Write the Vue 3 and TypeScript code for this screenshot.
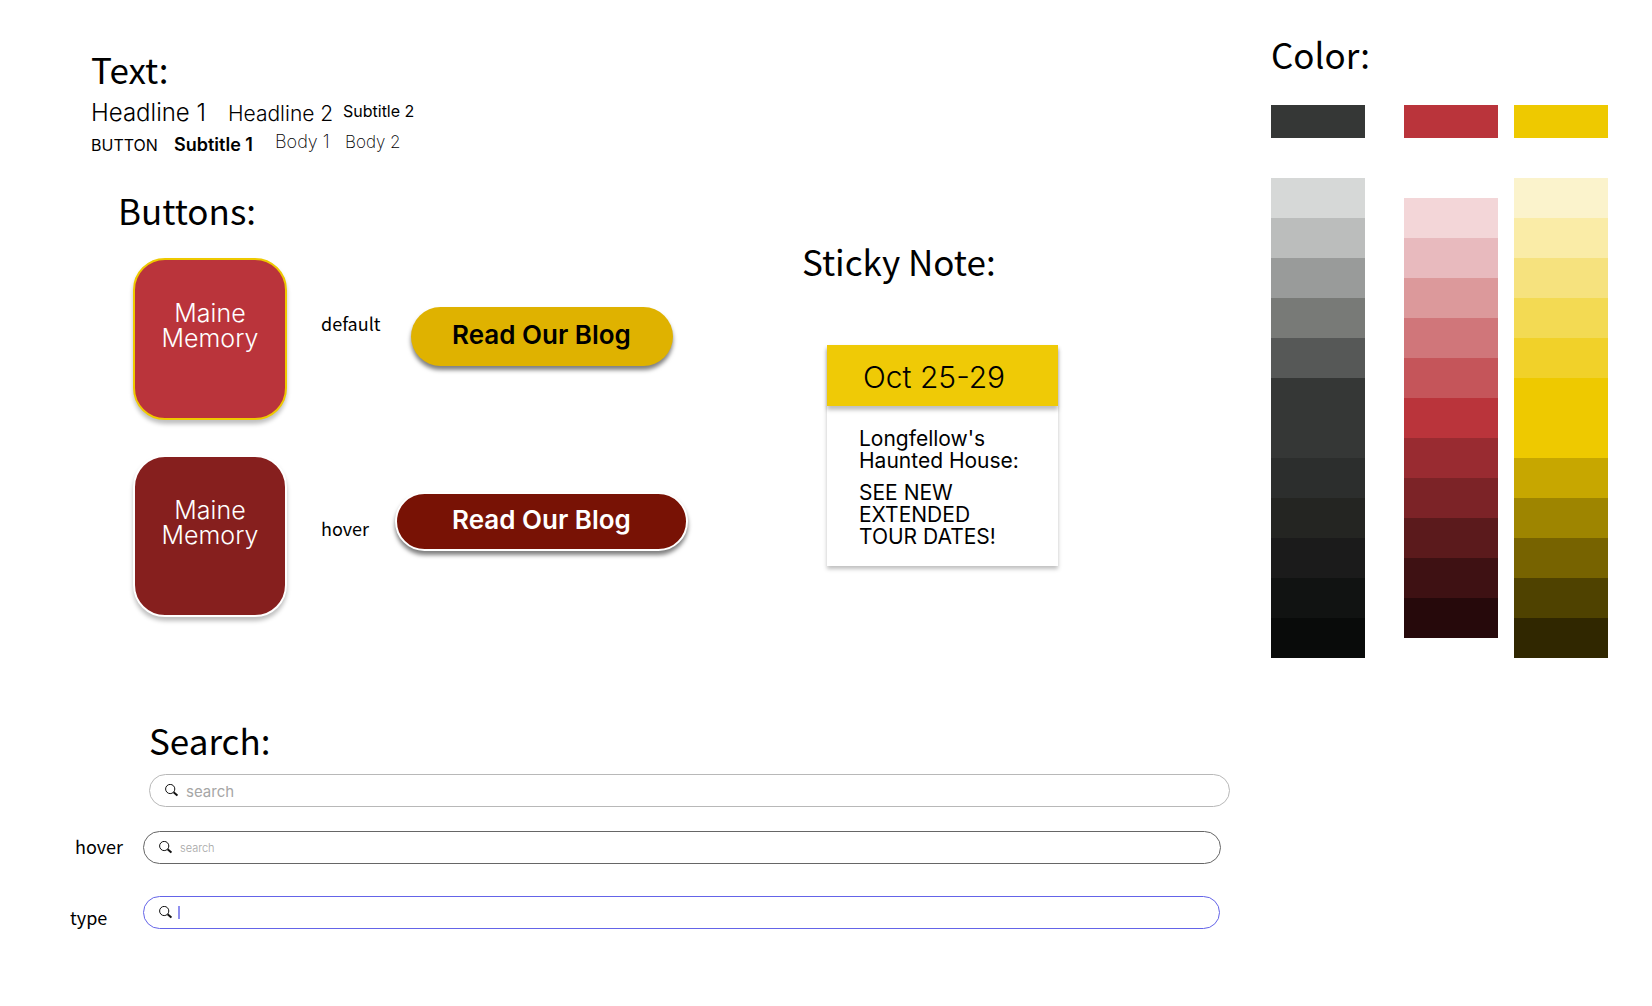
<script setup lang="ts">
interface Ramp {
  name: string
  base: string
  shades: string[]
}

const ramps: Ramp[] = [
  {
    name: 'gray',
    base: '#353736',
    shades: ['#d6d8d7', '#bbbdbc', '#999b9a', '#787a77', '#565857', '#353736', '#353736', '#2c2e2d', '#242522', '#1b1b1b', '#111312', '#090b0a'],
  },
  {
    name: 'red',
    base: '#ba343b',
    shades: ['#f3d6d8', '#e8babe', '#dc999b', '#d0767a', '#c5555a', '#ba343b', '#992b31', '#7c2327', '#5b1a1c', '#3e1113', '#26090b'],
  },
  {
    name: 'yellow',
    base: '#eec900',
    shades: ['#fbf3cc', '#faeca7', '#f6e27e', '#f3da53', '#f1d129', '#eec900', '#eec900', '#c7a700', '#9e8500', '#776300', '#4f4200', '#302700'],
  },
]
</script>

<template>
  <div class="page">
    <main class="main">
      <section class="type">
        <h1 class="title">Text:</h1>
        <div class="samples">
          <span class="headline-1">Headline 1</span>
          <span class="headline-2">Headline 2</span>
          <span class="subtitle-2">Subtitle 2</span>
        </div>
        <div class="samples">
          <span class="button-text">BUTTON</span>
          <span class="subtitle-1">Subtitle 1</span>
          <span class="body-1">Body 1</span>
          <span class="body-2">Body 2</span>
        </div>
      </section>

      <div class="components">
        <section class="buttons">
          <h1 class="title">Buttons:</h1>
          <div class="button-columns">
            <div class="tiles">
              <button class="tile" type="button">Maine Memory</button>
              <button class="tile tile-hover" type="button">Maine Memory</button>
            </div>
            <div class="states">
              <span class="label">default</span>
              <span class="label">hover</span>
            </div>
            <div class="pills">
              <button class="pill" type="button">Read Our Blog</button>
              <button class="pill pill-hover" type="button">Read Our Blog</button>
            </div>
          </div>
        </section>

        <section class="sticky">
          <h1 class="title">Sticky Note:</h1>
          <article class="note">
            <h2 class="note-date">Oct 25-29</h2>
            <div class="note-body">
              <p>Longfellow's<br />Haunted House:</p>
              <p>SEE NEW<br />EXTENDED<br />TOUR DATES!</p>
            </div>
          </article>
        </section>
      </div>

      <section class="search">
        <h1 class="title">Search:</h1>
        <div class="row row-default">
          <div class="field">
            <svg class="icon" viewBox="0 0 13 13" aria-hidden="true">
              <circle cx="5.2" cy="5" r="4.6" />
              <path class="handle" d="M8.6 8.2 L12.4 11.6" />
            </svg>
            <input type="text" placeholder="search" aria-label="search" />
          </div>
        </div>
        <div class="row row-hover">
          <label class="label" for="search-hover">hover</label>
          <div class="field field-hover">
            <svg class="icon" viewBox="0 0 13 13" aria-hidden="true">
              <circle cx="5.2" cy="5" r="4.6" />
              <path class="handle" d="M8.6 8.2 L12.4 11.6" />
            </svg>
            <input id="search-hover" type="text" placeholder="search" />
          </div>
        </div>
        <div class="row row-type">
          <label class="label" for="search-type">type</label>
          <div class="field field-type">
            <svg class="icon" viewBox="0 0 13 13" aria-hidden="true">
              <circle cx="5.2" cy="5" r="4.6" />
              <path class="handle" d="M8.6 8.2 L12.4 11.6" />
            </svg>
            <span class="caret"></span>
            <input id="search-type" type="text" />
          </div>
        </div>
      </section>
    </main>

    <aside class="colors">
      <h1 class="title">Color:</h1>
      <div class="ramps">
        <div v-for="ramp in ramps" :key="ramp.name" class="ramp" :class="ramp.name">
          <div class="base" :style="{ background: ramp.base }"></div>
          <div class="shades">
            <div v-for="(shade, i) in ramp.shades" :key="i" class="shade" :style="{ background: shade }"></div>
          </div>
        </div>
      </div>
    </aside>
  </div>
</template>

<style>
body {
  margin: 0;
  background: #fff;
}
</style>

<style scoped>
* {
  box-sizing: border-box;
}

.page {
  display: flex;
  gap: 41px;
  padding-right: 44px;
  color: #000;
  font-family: Inter, "Open Sans", sans-serif;
}

.main {
  flex: 1;
  min-width: 0;
}

.title {
  margin: 0;
  font: 400 35px/48px "Noto Sans CJK JP", "Noto Sans", sans-serif;
}

.label {
  font: 400 18px/24px "Noto Sans CJK JP", "Noto Sans", sans-serif;
}

/* Type samples */
.type {
  padding: 45px 0 0 91px;
}

.samples {
  display: flex;
  align-items: flex-start;
  height: 31px;
}

.type .title {
  margin-bottom: 7px;
}

.headline-1 {
  width: 137px;
  font-size: 24px;
  line-height: 26px;
  font-weight: 300;
}

.headline-2 {
  width: 115px;
  font-size: 21px;
  line-height: 28px;
  font-weight: 300;
}

.subtitle-2 {
  font-size: 16px;
  line-height: 22px;
}

.button-text {
  width: 83px;
  font-size: 16px;
  line-height: 28px;
}

.subtitle-1 {
  width: 101px;
  font-size: 18px;
  line-height: 28px;
  font-weight: 600;
}

.body-1 {
  width: 70px;
  font-size: 18px;
  line-height: 22px;
  font-weight: 200;
}

.body-2 {
  font-size: 17px;
  line-height: 22px;
  font-weight: 200;
}

/* Buttons and sticky note */
.components {
  display: flex;
  gap: 114px;
  padding: 24px 0 0 118px;
}

.buttons {
  width: 570px;
}

.button-columns {
  display: flex;
  padding: 24px 0 0 15px;
}

.tiles {
  display: flex;
  flex-direction: column;
  gap: 35px;
}

.tile {
  width: 154px;
  height: 162px;
  padding: 0 20px 26px;
  border: 2px solid #eec900;
  border-radius: 32px;
  background: #ba343b;
  box-shadow: 0 4px 4px rgba(0, 0, 0, 0.25);
  color: #fff;
  font: 300 25px/25px Inter, "Open Sans", sans-serif;
}

.tile-hover {
  border-color: #fff;
  background: #861f1e;
}

.states {
  display: flex;
  flex-direction: column;
  gap: 181px;
  width: 109px;
  padding: 53px 0 0 34px;
}

.pills {
  display: flex;
  flex-direction: column;
  align-items: center;
  gap: 126px;
  padding-top: 49px;
}

.pill {
  width: 262px;
  height: 59px;
  padding: 0 0 4px;
  border: 0;
  border-radius: 30px;
  background: #dfb200;
  box-shadow: 0 4px 4px rgba(0, 0, 0, 0.5);
  color: #000;
  font: 600 26px/28px Inter, "Open Sans", sans-serif;
}

.pill-hover {
  width: 293px;
  border: 2px solid #fff;
  background: #781205;
  color: #fff;
}

.sticky {
  padding-top: 51px;
}

.note {
  width: 231px;
  margin: 60px 0 0 25px;
  box-shadow: 0 3px 4px rgba(0, 0, 0, 0.25);
}

.note-date {
  margin: 0;
  padding: 14px 36px 11px;
  background: #efca06;
  box-shadow: 0 4px 4px rgba(0, 0, 0, 0.25);
  font-size: 30px;
  line-height: 36px;
  font-weight: 300;
}

.note-body {
  padding: 22px 0 8px 32px;
  font-size: 21px;
  line-height: 22px;
  font-weight: 400;
  white-space: nowrap;
}

.note-body p {
  margin: 0 0 10px;
}

/* Search fields */
.search {
  padding-top: 99px;
}

.search .title {
  margin-bottom: 10px;
  padding-left: 149px;
}

.row {
  display: flex;
  align-items: center;
}

.row-default {
  margin-bottom: 24px;
  padding-left: 149px;
}

.row-hover {
  margin-bottom: 32px;
  padding: 0 9px 0 75px;
}

.row-hover .label {
  width: 68px;
  padding-bottom: 4px;
}

.row-type {
  padding: 0 10px 0 70px;
}

.row-type .label {
  width: 73px;
  padding-top: 9px;
}

.field {
  display: flex;
  flex: 1;
  align-items: center;
  height: 33px;
  padding: 0 16px 0 15px;
  border: 1px solid #b8b8b8;
  border-radius: 17px;
}

.field-hover {
  border-color: #666;
}

.field-type {
  border-color: #6464e8;
}

.icon {
  width: 13px;
  height: 13px;
  fill: none;
  stroke: #111;
  stroke-width: 1;
}

.handle {
  stroke-width: 2;
}

.field input {
  flex: 1;
  min-width: 0;
  height: 24px;
  padding: 2px 0 0 8px;
  border: 0;
  outline: 0;
  background: transparent;
  font: 400 15px/22px Inter, "Open Sans", sans-serif;
}

.field input::placeholder {
  color: #a6a6a6;
  opacity: 1;
}

.field-hover input {
  padding-top: 0;
  font-size: 11px;
  font-weight: 300;
}

.caret {
  width: 2px;
  height: 13px;
  margin-left: 6px;
  background: #9090f0;
}

/* Colour ramps */
.colors {
  width: 337px;
  padding-top: 30px;
}

.ramps {
  display: flex;
  justify-content: space-between;
  padding-top: 27px;
}

.ramp {
  width: 94px;
}

.red {
  margin-left: 23px;
}

.base {
  height: 33px;
}

.shades {
  margin-top: 40px;
}

.red .shades {
  margin-top: 60px;
}

.shade {
  height: 40px;
}
</style>
